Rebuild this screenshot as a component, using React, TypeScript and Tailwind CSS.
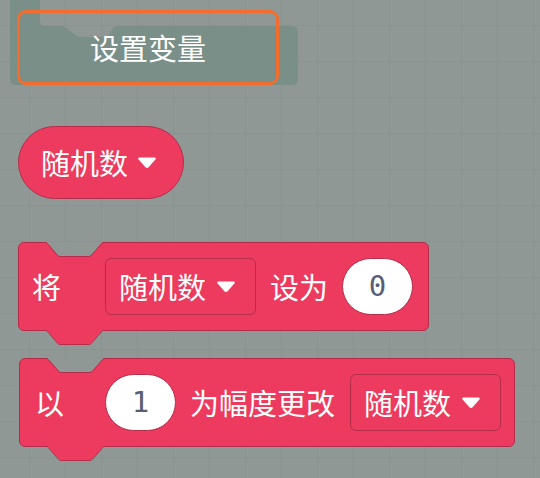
import React from 'react';

const cjk = "font-['Noto_Sans_CJK_SC','Noto_Sans',sans-serif]";

function Caret() {
  return (
    <svg width="20" height="12" viewBox="0 0 20 12" className="shrink-0">
      <path
        d="M2.5 0.5 H17.5 Q19.6 0.6 18.4 2.4 L11.6 10.2 Q10 11.8 8.4 10.2 L1.6 2.4 Q0.4 0.6 2.5 0.5 Z"
        fill="#ffffff"
      />
    </svg>
  );
}

function Dropdown({ label }: { label: string }) {
  return (
    <div className="flex h-[57px] w-[151px] shrink-0 items-center rounded-[6px] border border-[#b52d4b] pl-[13px]">
      <span className="whitespace-nowrap text-[29px] leading-none text-white">{label}</span>
      <span className="ml-[10px]">
        <Caret />
      </span>
    </div>
  );
}

function NumberInput({ value }: { value: string }) {
  return (
    <div className="flex h-[57px] w-[71px] shrink-0 items-center justify-center rounded-full border border-[#b52d4b] bg-white">
      <span className="font-['DejaVu_Sans_Mono',monospace] text-[29px] leading-none text-[#575e75]">{value}</span>
    </div>
  );
}

// notch cut into the top edge and tab hanging under the bottom edge
function Notch() {
  return (
    <svg width="90" height="16" viewBox="0 0 90 16" className="absolute left-[-1px] top-[-1px]">
      <path d="M27 0 Q28.5 0 29.5 1.2 L39.5 12.8 Q40.6 14 42.2 14 L70.8 14 Q72.4 14 73.5 12.8 L83.5 1.2 Q84.5 0 86 0 Z" fill="#8f9895" />
      <path d="M27 0.5 Q28.5 0.5 29.5 1.7 L39.5 13.3 Q40.6 14.5 42.2 14.5 L70.8 14.5 Q72.4 14.5 73.5 13.3 L83.5 1.7 Q84.5 0.5 86 0.5" fill="none" stroke="#b52d4b" />
    </svg>
  );
}

function Tab() {
  return (
    <svg width="90" height="16" viewBox="0 0 90 16" className="absolute left-[-1px] top-full">
      <path d="M27 -1 Q28.5 0 29.5 1.2 L39.5 12.8 Q40.6 14 42.2 14 L70.8 14 Q72.4 14 73.5 12.8 L83.5 1.2 Q84.5 0 86 -1 Z" fill="#ec3b5e" />
      <path d="M27 -0.5 Q28.5 0.5 29.5 1.7 L39.5 13.3 Q40.6 14.5 42.2 14.5 L70.8 14.5 Q72.4 14.5 73.5 13.3 L83.5 1.7 Q84.5 0.5 86 -0.5" fill="none" stroke="#b52d4b" />
    </svg>
  );
}

function StatementBlock({ children }: { children: React.ReactNode }) {
  return (
    <div className="relative flex w-fit items-center rounded-[6px] border border-[#b52d4b] bg-[#ec3b5e] py-[15px]">
      <Notch />
      {children}
      <Tab />
    </div>
  );
}

export default function App() {
  return (
    <div
      className={`relative h-[478px] w-[540px] overflow-hidden bg-[#8f9895] bg-[linear-gradient(to_right,#8a9390_1px,transparent_1px),linear-gradient(to_bottom,#8a9390_1px,transparent_1px)] bg-size-[36px_36px] bg-position-[29px_25px] ${cjk}`}
    >
      {/* ghost block behind the flyout button */}
      <svg width="540" height="100" className="absolute left-0 top-0">
        <path
          d="M10 -4 L40 -4 L40 21 Q40 26 45 26 L64 26 L76 35.5 Q78 37 81 37 L104 37 Q108 37 110 33 L113 28 Q114 26 117 26 L292 26 Q298 26 298 32 L298 79 Q298 85 292 85 L16 85 Q10 85 10 79 Z"
          fill="#7a8f88"
        />
      </svg>

      <div className="relative flex flex-col items-start pl-[18px] pt-[10px]">
        <button className="ml-[-1px] flex h-[75px] w-[262px] items-center justify-center rounded-[9px] border-[3px] border-[#f36d2e] text-[29px] leading-none text-white">
          设置变量
        </button>

        <div className="mt-[41px] flex h-[73px] w-[166px] items-center rounded-full border border-[#b52d4b] bg-[#ec3b5e] pl-[22px]">
          <span className="whitespace-nowrap text-[29px] leading-none text-white">随机数</span>
          <span className="ml-[9px]">
            <Caret />
          </span>
        </div>

        <div className="mt-[43px]">
          <StatementBlock>
            <span className="w-[86px] shrink-0 pl-[13px] text-[29px] leading-none text-white">将</span>
            <Dropdown label="随机数" />
            <span className="mx-[14px] whitespace-nowrap text-[29px] leading-none text-white">设为</span>
            <NumberInput value="0" />
            <span className="w-[15px] shrink-0" />
          </StatementBlock>
        </div>

        <div className="ml-[1px] mt-[27px]">
          <StatementBlock>
            <span className="w-[85px] shrink-0 pl-[15px] text-[29px] leading-none text-white">以</span>
            <NumberInput value="1" />
            <span className="ml-[14px] mr-[15px] whitespace-nowrap text-[29px] leading-none text-white">为幅度更改</span>
            <Dropdown label="随机数" />
            <span className="w-[13px] shrink-0" />
          </StatementBlock>
        </div>
      </div>
    </div>
  );
}
